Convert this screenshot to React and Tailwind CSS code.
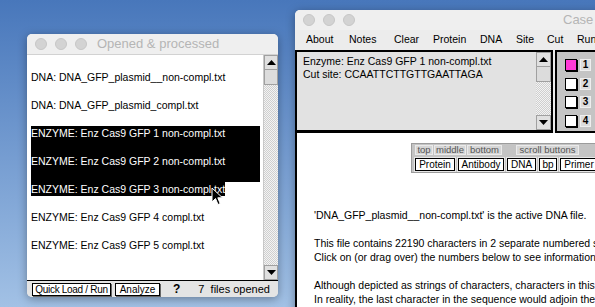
import React from "react";

const files = [
  { label: "DNA: DNA_GFP_plasmid__non-compl.txt" },
  { label: "DNA: DNA_GFP_plasmid_compl.txt" },
  { label: "ENZYME: Enz Cas9 GFP 1 non-compl.txt", sel: "row" },
  { label: "ENZYME: Enz Cas9 GFP 2 non-compl.txt", sel: "row" },
  { label: "ENZYME: Enz Cas9 GFP 3 non-compl.txt", sel: "text" },
  { label: "ENZYME: Enz Cas9 GFP 4 compl.txt" },
  { label: "ENZYME: Enz Cas9 GFP 5 compl.txt" },
];

const menu = [
  ["About", "w-[43px]"],
  ["Notes", "w-[45px]"],
  ["Clear", "w-[39px]"],
  ["Protein", "w-[47px]"],
  ["DNA", "w-[36px]"],
  ["Site", "w-[31px]"],
  ["Cut", "w-[30px]"],
  ["Run", "w-[30px]"],
];

function ArrowBox({ up }) {
  return (
    <div className="h-[15px] flex items-center justify-center bg-[#e0e0e0] border border-[#a0a0a0]">
      <svg width="9" height="5" viewBox="0 0 9 5">
        {up ? <path d="M0 5 L4.5 0 L9 5 Z" fill="#000" /> : <path d="M0 0 L4.5 5 L9 0 Z" fill="#000" />}
      </svg>
    </div>
  );
}

function Scrollbar({ className }) {
  return (
    <div className={`w-[15px] flex flex-col ${className}`}>
      <ArrowBox up />
      <div className="h-[15px] bg-[#dcdcdc] border border-[#a0a0a0] border-t-0" />
      <div className="flex-1 bg-[image:repeating-conic-gradient(#cfcfcf_0_25%,#f3f3f3_0_50%)] bg-[length:2px_2px]" />
      <ArrowBox />
    </div>
  );
}

function Lights() {
  return (
    <div className="flex gap-[8px]">
      {[0, 1, 2].map(i => (
        <div key={i} className="w-[12px] h-[12px] rounded-full bg-[#d3d3d3] border border-[#c6c6c6]" />
      ))}
    </div>
  );
}

function Cursor() {
  return (
    <svg className="absolute left-[211px] top-[187px]" width="13" height="19" viewBox="0 0 13 19">
      <path d="M1 1 L1 15 L4.5 11.5 L7 17.5 L9.2 16.6 L6.8 10.8 L11.5 10.8 Z" fill="#000" stroke="#fff" strokeWidth="1" />
    </svg>
  );
}

function OpenedWindow() {
  return (
    <div className="absolute left-[27px] top-[34px] w-[251px] h-[263px] rounded-[5px] overflow-hidden bg-[#ececec] flex flex-col shadow-[0_2px_10px_rgba(0,0,0,0.35)]">
      <div className="h-[21px] flex items-center pl-[8px] border-b border-[#d2d2d2] bg-[#efefef]">
        <Lights />
        <span className="ml-[10px] text-[13px] text-[#b5b5b5]">Opened &amp; processed</span>
      </div>
      <div className="flex-1 flex bg-white">
        <div className="flex-1 pt-[15px] pl-[4px] pr-[3px] text-[10.5px] leading-[14px] text-black">
          {files.map(f => (
            <div key={f.label} className={`h-[28px] whitespace-nowrap ${f.sel === "row" ? "bg-black text-white" : ""}`}>
              <span className={f.sel === "text" ? "bg-black text-white inline-block" : ""}>{f.label}</span>
            </div>
          ))}
        </div>
        <Scrollbar className="border-l border-[#c8c8c8]" />
      </div>
      <div className="h-[17px] border-t border-black bg-[#e4e4e4] flex items-start pt-[2px] pl-[5px]">
        <button className="w-[79px] h-[13px] bg-white border border-black shadow-[1px_1px_0_#666] text-[10px] tracking-[-0.3px] leading-none text-black whitespace-nowrap">
          Quick Load / Run
        </button>
        <button className="ml-[4px] w-[45px] h-[13px] bg-white border border-black shadow-[1px_1px_0_#666] text-[10px] leading-none text-black whitespace-nowrap">
          Analyze
        </button>
        <span className="ml-[13px] text-[12px] font-bold leading-[13px]">?</span>
        <span className="ml-[18px] text-[11px] leading-[13px] text-black whitespace-pre">7  files opened</span>
      </div>
    </div>
  );
}

function CaseWindow() {
  return (
    <div className="absolute left-[295px] top-[10px] w-[320px] h-[310px] rounded-t-[5px] overflow-hidden bg-[#ececec] flex flex-col shadow-[0_2px_10px_rgba(0,0,0,0.35)]">
      <div className="h-[20px] flex items-center pl-[8px] bg-[#efefef]">
        <Lights />
        <span className="ml-[208px] text-[13px] text-[#b5b5b5] whitespace-nowrap">Case Study</span>
      </div>
      <div className="h-[20px] flex items-center pl-[11px] text-[10.5px] text-black whitespace-nowrap">
        {menu.map(([m, w]) => (
          <span key={m} className={`${w} shrink-0`}>{m}</span>
        ))}
      </div>
      <div className="h-[83px] flex">
        <div className="w-[258px] flex border-2 border-b-[3px] border-black bg-[#e2e2e2]">
          <div className="flex-1 pl-[6px] pt-[3px] text-[10.5px] leading-[13px] text-black whitespace-nowrap">
            <div>Enzyme: Enz Cas9 GFP 1 non-compl.txt</div>
            <div>Cut site: CCAATTCTTGTTGAATTAGA</div>
          </div>
          <Scrollbar />
        </div>
        <div className="ml-[2px] flex-1 border-l-2 border-t-2 border-b-2 border-black bg-[#c4c4c4] pt-[7px] pl-[8px] flex flex-col gap-[6.7px]">
          {[1, 2, 3, 4].map(n => (
            <div key={n} className="flex items-center gap-[3px]">
              <div className={`w-[12px] h-[12px] border border-black shadow-[1px_1px_0_#000] ${n === 1 ? "bg-[#ff3ad6]" : "bg-white"}`} />
              <div className="w-[11px] h-[12px] bg-[#dcdcdc] border border-[#eeeeee] flex items-center justify-center text-[10px] font-bold leading-none">
                {n}
              </div>
            </div>
          ))}
        </div>
      </div>
      <div className="flex-1 bg-white border-l-2 border-black pt-[10px]">
        <div className="ml-[114px] h-[30px] bg-[#c4c4c4] border border-[#9c9c9c] pt-[1px] pl-[3px] text-[9.5px] leading-none">
          <div className="flex gap-[1px] h-[10px]">
            {["top", "middle", "bottom"].map((t, i) => (
              <span key={t} className={`${["w-[18px]", "w-[32px]", "w-[35px]"][i]} bg-[#d6d6d6] border border-[#eaeaea] text-[#555] flex items-center justify-center`}>{t}</span>
            ))}
            <span className="ml-[13px] w-[63px] bg-[#d6d6d6] border border-[#eaeaea] text-[#555] flex items-center justify-center">scroll buttons</span>
          </div>
          <div className="flex gap-[3px] mt-[3px] h-[13px] text-[10px]">
            {[["Protein", "w-[40px]"], ["Antibody", "w-[46px]"], ["DNA", "w-[29px]"], ["bp", "w-[18px]"], ["Primer", "w-[38px]"]].map(([b, w]) => (
              <span key={b} className={`${w} shrink-0 bg-white border border-black shadow-[0_0_0_1px_#e6e6e6] flex items-center justify-center text-black`}>{b}</span>
            ))}
          </div>
        </div>
        <div className="mt-[35px] pl-[17px] text-[10.5px] leading-[14px] text-black whitespace-nowrap">
          <div className="mb-[14px]">'DNA_GFP_plasmid__non-compl.txt' is the active DNA file.</div>
          <div>This file contains 22190 characters in 2 separate numbered sequences.</div>
          <div className="mb-[14px]">Click on (or drag over) the numbers below to see information about each.</div>
          <div>Although depicted as strings of characters, characters in this file are circular.</div>
          <div>In reality, the last character in the sequence would adjoin the first.</div>
        </div>
      </div>
    </div>
  );
}

export default function App() {
  return (
    <div className="relative w-[595px] h-[307px] overflow-hidden bg-gradient-to-b from-[#4877bb] to-[#a2c1e5] font-['Liberation_Sans',Arial,sans-serif]">
      <CaseWindow />
      <OpenedWindow />
      <Cursor />
    </div>
  );
}
